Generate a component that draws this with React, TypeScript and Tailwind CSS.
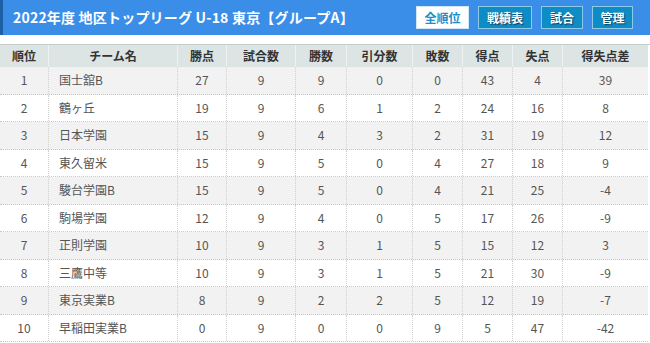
const rows: [string, string, number, number, number, number, number, number, number, number][] = [
  ['1', '国士舘B', 27, 9, 9, 0, 0, 43, 4, 39],
  ['2', '鶴ヶ丘', 19, 9, 6, 1, 2, 24, 16, 8],
  ['3', '日本学園', 15, 9, 4, 3, 2, 31, 19, 12],
  ['4', '東久留米', 15, 9, 5, 0, 4, 27, 18, 9],
  ['5', '駿台学園B', 15, 9, 5, 0, 4, 21, 25, -4],
  ['6', '駒場学園', 12, 9, 4, 0, 5, 17, 26, -9],
  ['7', '正則学園', 10, 9, 3, 1, 5, 15, 12, 3],
  ['8', '三鷹中等', 10, 9, 3, 1, 5, 21, 30, -9],
  ['9', '東京実業B', 8, 9, 2, 2, 5, 12, 19, -7],
  ['10', '早稲田実業B', 0, 9, 0, 0, 9, 5, 47, -42],
];

const heads = ['順位', 'チーム名', '勝点', '試合数', '勝数', '引分数', '敗数', '得点', '失点', '得失点差'];

const cols = 'grid grid-cols-[49px_129px_49px_69px_51px_66px_50px_50px_50px_85px] w-[648px]';

export default function App() {
  return (
    <div className="w-[650px] h-[343px] overflow-hidden bg-white font-['Noto_Sans_CJK_JP',sans-serif] text-[12px]">
      <div className="h-[35px] bg-[#3a8ee8] border-l-[3px] border-[#1d5fa6] flex items-center justify-between pl-[10px] pr-[17px]">
        <h1 className="text-white font-bold text-[14px] tracking-[0.2px]">2022年度 地区トップリーグ U-18 東京【グループA】</h1>
        <div className="flex gap-[9px]">
          <span className="w-[53px] h-[23px] flex items-center justify-center bg-white border border-[#cfe6f5] text-[#1a8fcc] font-bold">全順位</span>
          <span className="w-[54px] h-[23px] flex items-center justify-center bg-[#0d8cc6] border border-[#8ccbe8] text-white font-bold [text-shadow:1px_1px_1px_#0b3f5e]">戦績表</span>
          <span className="w-[42px] h-[23px] flex items-center justify-center bg-[#0d8cc6] border border-[#8ccbe8] text-white font-bold [text-shadow:1px_1px_1px_#0b3f5e]">試合</span>
          <span className="w-[41px] h-[23px] flex items-center justify-center bg-[#0d8cc6] border border-[#8ccbe8] text-white font-bold [text-shadow:1px_1px_1px_#0b3f5e]">管理</span>
        </div>
      </div>
      <div className="mt-[9px] border-t border-[#c4cccc]">
        <div className={`${cols} h-[22px] bg-[#dde4e4] text-[#333] font-bold`}>
          {heads.map((h, i) => (
            <div key={h} className={`flex items-center justify-center ${i < 9 ? 'border-r border-[#eef2f2]' : ''}`}>
              {h}
            </div>
          ))}
        </div>
        {rows.map((r, ri) => (
          <div key={r[0]} className={`${cols} h-[27.5px] border-b border-dotted border-[#c8c8c8] text-[#555] ${ri % 2 === 0 ? 'bg-[#f2f2f2]' : 'bg-white'}`}>
            {r.map((v, i) => (
              <div
                key={i}
                className={`flex items-center ${i === 1 ? 'pl-[10px]' : 'justify-center'} ${i < 9 ? 'border-r border-dotted border-[#d0d0d0]' : ''}`}
              >
                {v}
              </div>
            ))}
          </div>
        ))}
      </div>
    </div>
  );
}
